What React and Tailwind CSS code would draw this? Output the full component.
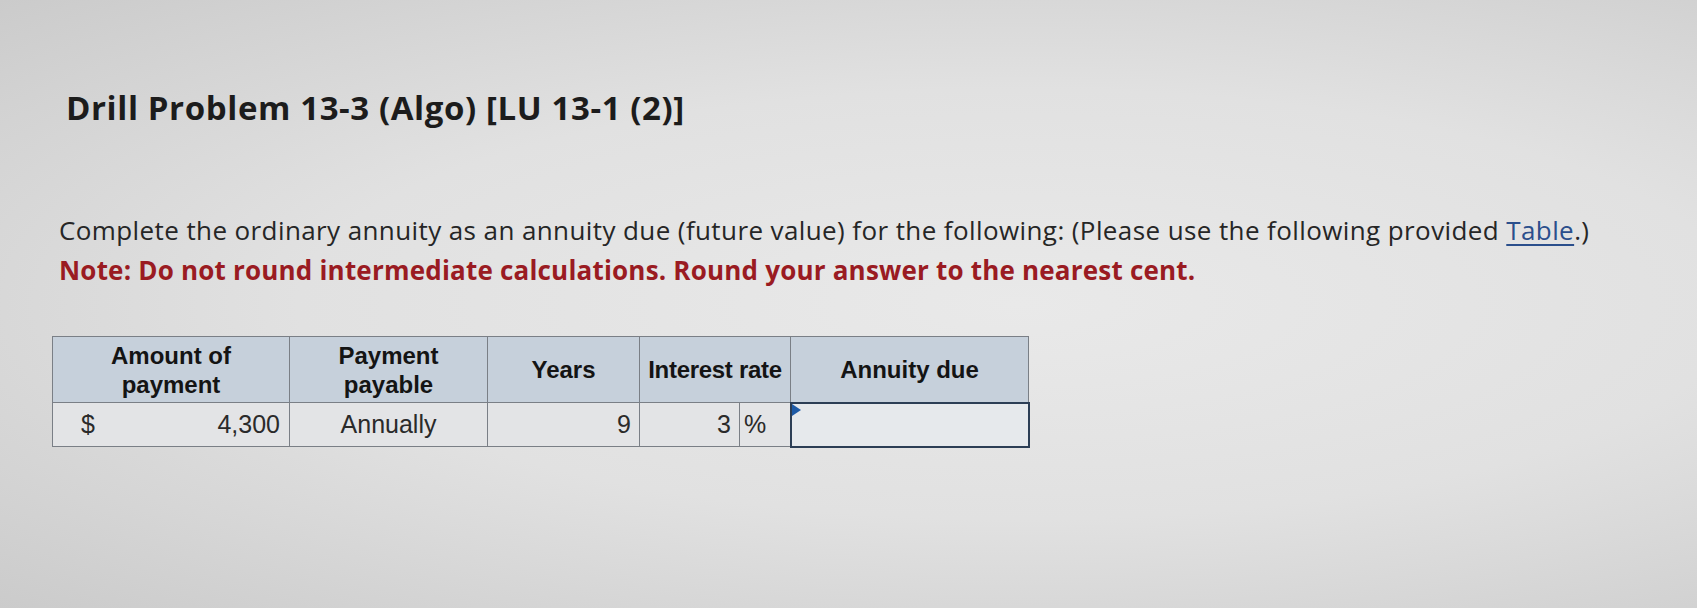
export default function App() {
  return (
    <div className="w-[1697px] h-[608px] overflow-hidden bg-radial-[at_60%_50%] from-[#e9e9e9] via-[#e1e1e1] to-[#cbcbcb] font-['Open_Sans',sans-serif] text-[#1c1c1c]">
      <div className="pl-[66px] pt-[88px]">
        {/* title */}
        <h1 className="text-[33px] font-bold leading-[40px] tracking-[0.6px]">
          Drill Problem 13-3 (Algo) [LU 13-1 (2)]
        </h1>

        {/* instructions */}
        <div className="mt-[82px] -ml-[7px] text-[26px] leading-[40px] tracking-[0.4px]">
          <p className="text-[#262626]">
            Complete the ordinary annuity as an annuity due (future value) for the following: (Please use the following provided{" "}
            <span className="text-[#2b4f8c] underline underline-offset-4 decoration-2">Table</span>.)
          </p>
          <p className="font-bold text-[#9a1b22] tracking-[0.2px]">
            Note: Do not round intermediate calculations. Round your answer to the nearest cent.
          </p>
        </div>

        {/* table */}
        <table className="mt-[46px] -ml-[14px] border-collapse font-['Liberation_Sans',Arial,sans-serif] text-[25px]">
          <thead>
            <tr className="bg-[#c6d0db] h-[66px] text-[24px] font-bold leading-[29px] text-[#141414]">
              <th colSpan={2} className="w-[237px] border border-[#7a7f86] font-bold">Amount of<br />payment</th>
              <th className="w-[198px] border border-[#7a7f86] font-bold">Payment<br />payable</th>
              <th className="w-[152px] border border-[#7a7f86] font-bold">Years</th>
              <th colSpan={2} className="w-[151px] border border-[#7a7f86] font-bold tracking-[-0.3px]">Interest rate</th>
              <th className="w-[238px] border border-[#7a7f86] border-b-[#2c3e55] font-bold">Annuity due</th>
            </tr>
          </thead>
          <tbody>
            <tr className="h-[44px] bg-[#e3e4e6] text-[#2a2a2a]">
              <td className="w-[60px] border-y border-l border-[#7a7f86] pl-[28px] text-left">$</td>
              <td className="border-y border-r border-[#7a7f86] pr-[9px] text-right">4,300</td>
              <td className="border border-[#7a7f86] text-center">Annually</td>
              <td className="border border-[#7a7f86] pr-[8px] text-right">9</td>
              <td className="w-[100px] border border-[#7a7f86] pr-[8px] text-right">3</td>
              <td className="w-[51px] border border-[#7a7f86] pl-[4px] text-left">%</td>
              <td className="relative p-0 border-2 border-[#2c3e55] bg-[#e6e9ec]">
                <span className="absolute left-0 top-0 w-0 h-0 border-y-[6px] border-y-transparent border-l-[9px] border-l-[#1d5aa6]" />
              </td>
            </tr>
          </tbody>
        </table>
      </div>
    </div>
  );
}
